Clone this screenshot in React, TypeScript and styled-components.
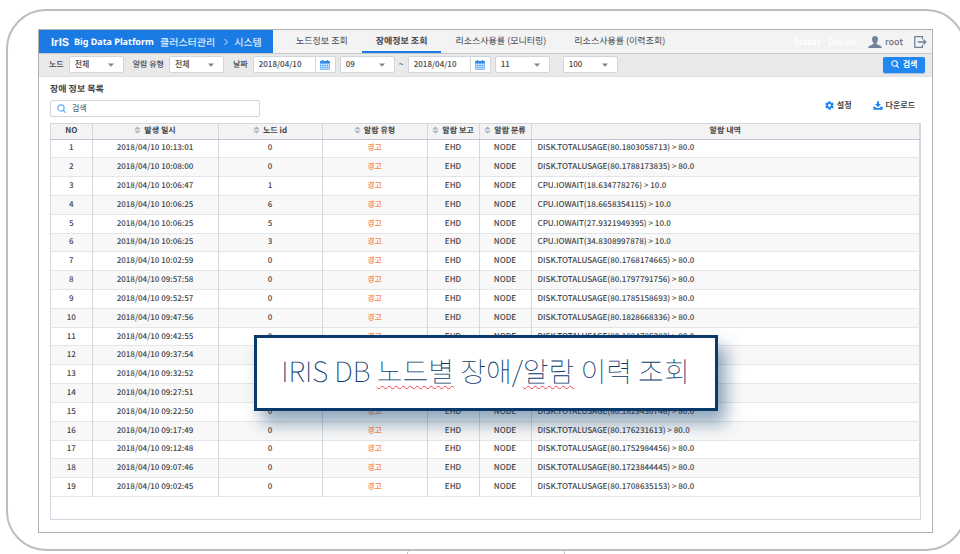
import React from "react";
import styled, { createGlobalStyle } from "styled-components";
import { FaCog } from "react-icons/fa";

const GlobalStyle = createGlobalStyle`
  *, *::before, *::after { box-sizing: border-box; }
  body {
    margin: 0;
    background: #fff;
    color: #43464b;
    font-family: "Noto Sans CJK KR", "Noto Sans", sans-serif;
    font-size: 8px;
    font-weight: 500;
    line-height: 12px;
    text-rendering: geometricPrecision;
  }
  button, input, select { font: inherit; color: inherit; }
  h1, h2, p { margin: 0; }
`;

const Page = styled.div`
  min-height: 100vh;
  padding: 9px 0 0 6px;
  overflow: hidden;
`;

const Device = styled.div`
  margin-right: -6px;
`;

const Tablet = styled.div`
  padding: 18px 31px 16px 30px;
  border: 2px solid #bdbdbd;
  border-radius: 40px;
`;

const HomeBar = styled.div`
  width: 158px;
  height: 3px;
  margin: 0 auto;
  border: solid #bdbdbd;
  border-width: 0 1px;
  border-radius: 3px 3px 0 0;
`;

const Screen = styled.div`
  position: relative;
  border: 1px solid #b0b0b0;
  background: #fff;
`;

const Header = styled.header`
  display: flex;
  height: 23px;
  background: #f3f3f4;
`;

const Brand = styled.div`
  display: flex;
  flex: none;
  align-items: center;
  width: 234px;
  padding-left: 12px;
  background: #1b7be4;
  color: #fff;
  white-space: nowrap;
`;

const Logo = styled.span`
  width: 23px;
  font: 700 11px/14px Inter, sans-serif;
`;

const Product = styled.h1`
  width: 86px;
  font-family: "Noto Sans", sans-serif;
  font-size: 9px;
  line-height: 14px;
  font-weight: 700;
`;

const Crumb = styled.span`
  font-size: 10px;
  line-height: 14px;
  font-weight: 500;
  color: #dcebfc;
`;

const CrumbArrow = styled.svg`
  width: 4px;
  height: 8px;
  margin: 0 6px 0 9px;
`;

const Tabs = styled.nav`
  display: flex;
  flex: 1;
`;

const Tab = styled.a<{ $active?: boolean }>`
  padding: 4px 14px 0;
  border-bottom: 2px solid ${p => (p.$active ? "#1b7be4" : "transparent")};
  font-size: 9px;
  line-height: 14px;
  font-weight: ${p => (p.$active ? 700 : 400)};
  color: #43474d;
  text-decoration: none;
  white-space: nowrap;
  &:first-child { margin-left: 9px; }
`;

const Account = styled.div`
  display: flex;
  align-items: center;
  padding-right: 5px;
  font-size: 9px;
  color: #667180;
`;

const FaintLink = styled.a`
  margin-right: 7px;
  color: #fff;
  text-decoration: none;
`;

const UserName = styled.span`
  display: flex;
  align-items: center;
  gap: 3px;
  margin: 0 11px 0 3px;
`;

const IconButton = styled.button`
  display: flex;
  padding: 0;
  border: 0;
  background: none;
`;

const Filters = styled.form`
  display: flex;
  align-items: center;
  height: 24px;
  padding: 0 7px 1px 10px;
  border-top: 1px solid #c9c9ca;
  border-bottom: 1px solid #dde0e3;
  background: #e9e9ea;
`;

const Label = styled.label`
  margin-right: 5px;
  font-weight: 500;
  white-space: nowrap;
`;

const SelectBox = styled.span<{ $gap?: number }>`
  display: flex;
  flex: none;
  align-items: center;
  width: 55px;
  height: 17px;
  margin-right: ${p => p.$gap ?? 9}px;
  border: 1px solid #cfd6de;
  border-radius: 2px;
  background: #fff;
  select {
    width: 100%;
    height: 15px;
    padding: 0 0 1px 5px;
    border: 0;
    background: none;
    appearance: none;
    outline: none;
  }
  svg { flex: none; margin-right: 9px; margin-left: -5px; pointer-events: none; }
`;

const DateBox = styled.span<{ $gap: number }>`
  display: flex;
  flex: none;
  width: 83px;
  height: 17px;
  margin-right: ${p => p.$gap}px;
  border: 1px solid #cfd6de;
  border-radius: 2px;
  background: #fff;
  input {
    flex: 1;
    min-width: 0;
    padding: 0 0 1px 5px;
    border: 0;
    background: none;
    outline: none;
  }
  button {
    width: 20px;
    align-items: center;
    justify-content: center;
    border-left: 1px solid #cfd6de;
  }
`;

const Tilde = styled.span`
  width: 9px;
`;

const SearchButton = styled.button`
  display: flex;
  align-items: center;
  justify-content: center;
  gap: 4px;
  width: 42px;
  height: 16px;
  margin-left: auto;
  padding: 0 0 1px;
  border: 0;
  border-radius: 2px;
  background: #1e87f0;
  color: #fff;
  font-weight: 700;
  box-shadow: 0 1px 1px #a8bdd4;
`;

const Content = styled.main`
  padding: 5px 11px 12px;
`;

const Title = styled.h2`
  font-size: 9px;
  line-height: 14px;
  font-weight: 700;
`;

const Tools = styled.div`
  display: flex;
  justify-content: space-between;
  margin: 4px 0 6px;
`;

const SearchField = styled.label`
  display: flex;
  align-items: center;
  gap: 6px;
  width: 210px;
  height: 17px;
  padding-left: 6px;
  border: 1px solid #cfd6de;
  border-radius: 2px;
  input {
    flex: 1;
    min-width: 0;
    padding: 0 0 1px;
    border: 0;
    outline: none;
  }
  input::placeholder { color: #6b7078; opacity: 1; }
`;

const Actions = styled.div`
  display: flex;
  gap: 21px;
  padding-right: 6px;
`;

const Action = styled.button`
  display: flex;
  align-items: center;
  gap: 3px;
  height: 12px;
  margin-top: -1px;
  padding: 0;
  border: 0;
  background: none;
  font-weight: 700;
  svg { color: #1e87f0; }
`;

const TablePanel = styled.div`
  padding-bottom: 22px;
  border: 1px solid #d3d8e0;
`;

const Table = styled.table`
  width: 100%;
  height: 373px;
  table-layout: fixed;
  border-collapse: collapse;
  border-right: 1px solid #d3d8e0;
`;

const Th = styled.th<{ $width?: number }>`
  width: ${p => (p.$width ? `${p.$width}px` : "auto")};
  height: 15px;
  padding: 0;
  border-left: 1px solid #d3d7de;
  border-bottom: 1px solid #bcc3d2;
  background: #f3f3f4;
  font-weight: 700;
  white-space: nowrap;
  &:first-child { border-left: 0; }
  svg { margin-right: 3px; vertical-align: -1px; }
`;

const Row = styled.tr`
  border-bottom: 1px solid #e3e5e8;
  &:nth-child(even) { background: #f8f8f8; }
`;

const Td = styled.td<{ $warn?: boolean; $left?: boolean }>`
  padding: 0 0 0 ${p => (p.$left ? "6px" : "0")};
  border-left: 1px solid #d3d7de;
  text-align: ${p => (p.$left ? "left" : "center")};
  color: ${p => (p.$warn ? "#f7894a" : "inherit")};
  white-space: nowrap;
  &:first-child { border-left: 0; }
`;

const Callout = styled.div`
  position: absolute;
  top: 305px;
  left: 50%;
  width: 464px;
  padding: 15px 0 19px;
  border: 3px solid #0a3a6a;
  background: #fff;
  box-shadow: 8px 12px 16px rgba(10, 58, 106, 0.45);
  color: #0a3a6a;
  font: 100 28px/36px "Noto Sans CJK KR", sans-serif;
  text-align: center;
  white-space: nowrap;
  transform: translateX(-50%);
`;

const Misspelt = styled.span`
  text-decoration: underline wavy #f4484b 1px;
  text-underline-offset: 3px;
  text-decoration-skip-ink: none;
`;

const Caret = () => (
  <svg width="6" height="4" viewBox="0 0 6 4"><path d="M0 .5h6L3 3.7z" fill="#77859a" /></svg>
);

const Magnifier = ({ size, color }: { size: number; color: string }) => (
  <svg width={size} height={size} viewBox="0 0 10 10" fill="none" stroke={color} strokeWidth="1.3" strokeLinecap="round">
    <circle cx="4.4" cy="4.4" r="3.5" /><path d="M7 7l2.3 2.3" />
  </svg>
);

const Calendar = () => (
  <svg width="10" height="10" viewBox="0 0 10 10">
    <path d="M1.800 0h1.400v1h3.600V0h1.400v1h1q.8 0 .8.8V3.400H0V1.800Q0 1 .8 1h1z" fill="#2b8cee" />
    <path d="M.4 3.400h9.200v6.200H.4z" fill="#e5f1fd" stroke="#4a9df2" strokeWidth=".7" />
    <path d="M.5 5.500h9M.5 7.500h9M2.700 3.400v6M5 3.400v6M7.300 3.400v6" stroke="#5aa7f3" strokeWidth=".7" />
  </svg>
);

const Sort = () => (
  <svg width="7" height="8" viewBox="0 0 7 8" fill="#aab3c0"><path d="M.3 3.500L3.500.6l3.200 2.900zM.3 4.700h6.400L3.500 7.500z" /></svg>
);

const UserIcon = () => (
  <svg width="14" height="12" viewBox="0 0 14 12" fill="#71839b">
    <path d="M7 0c2 0 3 1.300 3 3.200 0 1.500-.6 2.800-1.500 3.600v1c.3.7 1.300.9 2.700 1.400 1.700.6 2.500 1 2.600 2.800H.2C.3 10.200 1.100 9.800 2.800 9.200 4.200 8.700 5.200 8.500 5.500 7.800v-1C4.600 6 4 4.700 4 3.200 4 1.300 5 0 7 0z" />
  </svg>
);

const LogoutIcon = () => (
  <svg width="13" height="12" viewBox="0 0 13 12" fill="none" stroke="#71839b" strokeWidth="1.300">
    <path d="M8.500 3.200V.7H.8v10.600h7.700V8.800M3.800 6h8M9.500 3.700L11.800 6 9.500 8.300" />
  </svg>
);

const DownloadIcon = () => (
  <svg width="10" height="9" viewBox="0 0 10 9" fill="currentColor">
    <path d="M4 .3h2v2.800h2L5 6.200 2 3.100h2zM.3 5.700h2L3.600 7h2.800l1.300-1.300h2v3H.3z" />
  </svg>
);

type SelectProps = { name: string; value: string; gap?: number };

const Select = ({ name, value, gap }: SelectProps) => (
  <SelectBox $gap={gap}>
    <select id={name} aria-label={name} defaultValue={value}><option>{value}</option></select>
    <Caret />
  </SelectBox>
);

const DateInput = ({ name, gap }: { name: string; gap: number }) => (
  <DateBox $gap={gap}>
    <input id={name} aria-label={name} defaultValue="2018/04/10" />
    <IconButton type="button" aria-label="달력"><Calendar /></IconButton>
  </DateBox>
);

const columns: { name: string; width?: number; sortable?: boolean }[] = [
  { name: "NO", width: 41 },
  { name: "발생 일시", width: 126, sortable: true },
  { name: "노드 id", width: 104, sortable: true },
  { name: "알람 유형", width: 105, sortable: true },
  { name: "알람 보고", width: 52, sortable: true },
  { name: "알람 분류", width: 52, sortable: true },
  { name: "알람 내역" },
];

const disk = (v: string) => `DISK.TOTALUSAGE(${v}) > 80.0`;
const cpu = (v: string) => `CPU.IOWAIT(${v}) > 10.0`;

const alarms: [string, number, string][] = [
  ["10:13:01", 0, disk("80.1803058713")],
  ["10:08:00", 0, disk("80.1788173835")],
  ["10:06:47", 1, cpu("18.634778276")],
  ["10:06:25", 6, cpu("18.6658354115")],
  ["10:06:25", 5, cpu("27.9321949395")],
  ["10:06:25", 3, cpu("34.8308997878")],
  ["10:02:59", 0, disk("80.1768174665")],
  ["09:57:58", 0, disk("80.1797791756")],
  ["09:52:57", 0, disk("80.1785158693")],
  ["09:47:56", 0, disk("80.1828668336")],
  ["09:42:55", 0, disk("80.1884785383")],
  ["09:37:54", 0, ""],
  ["09:32:52", 0, ""],
  ["09:27:51", 0, ""],
  ["09:22:50", 0, disk("80.1829430746")],
  ["09:17:49", 0, disk("80.176231613")],
  ["09:12:48", 0, disk("80.1752984456")],
  ["09:07:46", 0, disk("80.1723844445")],
  ["09:02:45", 0, disk("80.1708635153")],
];

export default function App() {
  return (
    <Page>
      <GlobalStyle />
      <Device>
        <Tablet>
          <Screen>
            <Header>
              <Brand>
                <Logo>IrIS</Logo>
                <Product>Big Data Platform</Product>
                <Crumb>클러스터관리</Crumb>
                <CrumbArrow viewBox="0 0 4 8" fill="none" stroke="#dcebfc"><path d="M.5 1l3 3-3 3" /></CrumbArrow>
                <Crumb>시스템</Crumb>
              </Brand>
              <Tabs>
                <Tab href="#nodes">노드정보 조회</Tab>
                <Tab href="#alarms" $active>장애정보 조회</Tab>
                <Tab href="#monitoring">리소스사용률 (모니터링)</Tab>
                <Tab href="#history">리소스사용률 (이력조회)</Tab>
              </Tabs>
              <Account>
                <FaintLink href="#status">Status</FaintLink>
                <FaintLink href="#docker">Docker</FaintLink>
                <UserName><UserIcon />root</UserName>
                <IconButton type="button" aria-label="로그아웃"><LogoutIcon /></IconButton>
              </Account>
            </Header>
            <Filters onSubmit={e => e.preventDefault()}>
              <Label htmlFor="node">노드</Label>
              <Select name="node" value="전체" />
              <Label htmlFor="type">알람 유형</Label>
              <Select name="type" value="전체" />
              <Label htmlFor="from">날짜</Label>
              <DateInput name="from" gap={4} />
              <Select name="from-hour" value="09" gap={4} />
              <Tilde>~</Tilde>
              <DateInput name="to" gap={4} />
              <Select name="to-hour" value="11" gap={13} />
              <Select name="limit" value="100" />
              <SearchButton type="submit"><Magnifier size={8} color="#fff" />검색</SearchButton>
            </Filters>
            <Content>
              <Title>장애 정보 목록</Title>
              <Tools>
                <SearchField>
                  <Magnifier size={9} color="#5aaaf5" />
                  <input type="search" aria-label="검색" placeholder="검색" />
                </SearchField>
                <Actions>
                  <Action type="button"><FaCog size={9} />설정</Action>
                  <Action type="button"><DownloadIcon />다운로드</Action>
                </Actions>
              </Tools>
              <TablePanel>
                <Table>
                  <thead>
                    <tr>
                      {columns.map(c => (
                        <Th key={c.name} $width={c.width}>{c.sortable && <Sort />}{c.name}</Th>
                      ))}
                    </tr>
                  </thead>
                  <tbody>
                    {alarms.map(([time, node, detail], i) => (
                      <Row key={i}>
                        <Td>{i + 1}</Td>
                        <Td>2018/04/10 {time}</Td>
                        <Td>{node}</Td>
                        <Td $warn>경고</Td>
                        <Td>EHD</Td>
                        <Td>NODE</Td>
                        <Td $left>{detail}</Td>
                      </Row>
                    ))}
                  </tbody>
                </Table>
              </TablePanel>
            </Content>
            <Callout>
              IRIS DB <Misspelt>노드별</Misspelt> 장애/<Misspelt>알람</Misspelt> 이력 조회
            </Callout>
          </Screen>
        </Tablet>
        <HomeBar />
      </Device>
    </Page>
  );
}
